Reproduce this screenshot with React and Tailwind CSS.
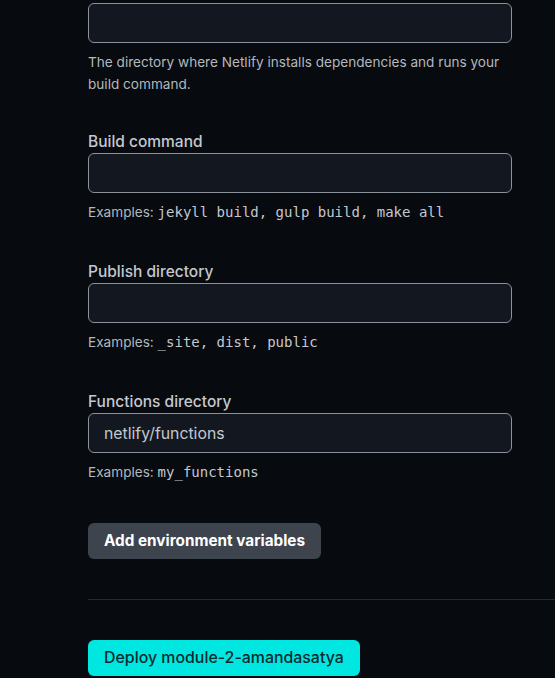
import React from 'react';

const Field = ({ label, value = "", children, className = "" }) => {
    return (
        <div className={className}>
            {label && <label className="block text-[15.5px] leading-[22px] font-medium text-[#c4c8ce]">{label}</label>}
            <input
                type="text"
                defaultValue={value}
                className="block w-[424px] h-10 rounded-md border border-[#8b929b] bg-[#131820] px-[15px] text-[15.8px] text-[#c4c8ce] outline-none"
            />
            <div className="mt-2 text-[13.6px] leading-[22px] text-[#b3b8bf]">{children}</div>
        </div>
    );
};

const Code = ({ children }) => (
    <code className="font-['DejaVu_Sans_Mono',monospace] text-[14px] text-[#c4c8ce]">{children}</code>
);

export default function App() {
    return (
        <div className="min-h-[678px] bg-[#070a0e] font-['Inter',sans-serif] overflow-hidden">
            <div className="pl-[88px] pt-[3px]">
                <Field>
                    <p className="w-[424px]">The directory where Netlify installs dependencies and runs your build command.</p>
                </Field>
                <Field label="Build command" className="mt-9">
                    Examples: <Code>jekyll build, gulp build, make all</Code>
                </Field>
                <Field label="Publish directory" className="mt-[38px]">
                    Examples: <Code>_site, dist, public</Code>
                </Field>
                <Field label="Functions directory" className="mt-[38px]" value="netlify/functions">
                    Examples: <Code>my_functions</Code>
                </Field>
                <button className="mt-10 h-9 rounded-md bg-[#3d444d] px-4 text-[15.3px] font-bold text-white">
                    Add environment variables
                </button>
                <div className="mt-10 h-px bg-[#262b32]"></div>
                <button className="mt-10 h-9 rounded-md bg-[#00e6e0] px-4 text-[15.9px] font-medium text-[#0c2a2e]">
                    Deploy module-2-amandasatya
                </button>
            </div>
        </div>
    );
}
